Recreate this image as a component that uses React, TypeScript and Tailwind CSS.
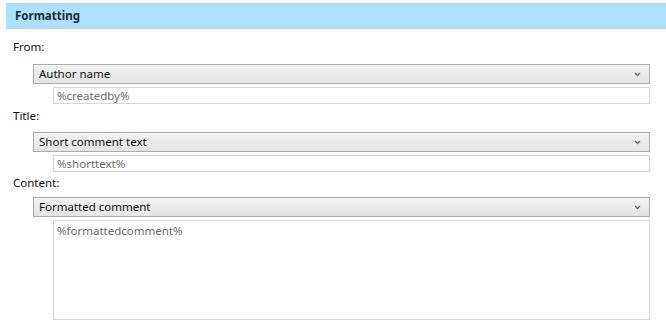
import React from 'react';

const font = { fontFamily: '"Noto Sans", "Open Sans", Arial, sans-serif' };

const Chevron = () => (
  <svg width="7" height="5" viewBox="0 0 7 5" className="shrink-0">
    <path d="M1 1 L3.5 3.5 L6 1" fill="none" stroke="#6a6a6a" strokeWidth="1.3" />
  </svg>
);

const Dropdown = ({ value, className = '' }: { value: string; className?: string }) => (
  <div
    className={`ml-[20px] w-[617px] h-[20px] flex items-center justify-between border border-[#acacac] bg-gradient-to-b from-[#f3f3f3] to-[#e4e4e4] pl-[5px] pr-[8px] text-[11.5px] text-[#111] ${className}`}
  >
    <span className="leading-[18px]">{value}</span>
    <Chevron />
  </div>
);

const Field = ({ value, tall = false }: { value: string; tall?: boolean }) => (
  <div
    className={`ml-[40px] mt-[3px] w-[597px] border border-[#d6d6d6] bg-white pl-[3px] text-[11.5px] text-[#6d6d6d] ${
      tall ? 'h-[100px] pt-[1px]' : 'h-[17px] flex items-center'
    }`}
  >
    <span className="leading-[15px]">{value}</span>
  </div>
);

export default function App() {
  return (
    <div className="w-[666px] h-[327px] bg-white overflow-hidden" style={font}>
      {/* Section header */}
      <div className="mt-[3px] ml-[6px] h-[26px] bg-[#ade1fb] pl-[9px] flex items-center">
        <span className="text-[11.5px] font-bold text-[#1c2b36]">Formatting</span>
      </div>

      <div className="pl-[13px]">
        <div className="mt-[10px] text-[11.5px] leading-[16px] text-[#111]">From:</div>
        <Dropdown value="Author name" className="mt-[9px]" />
        <Field value="%createdby%" />

        <div className="mt-[4px] text-[11.5px] leading-[16px] text-[#111]">Title:</div>
        <Dropdown value="Short comment text" className="mt-[8px]" />
        <Field value="%shorttext%" />

        <div className="mt-[3px] text-[11.5px] leading-[16px] text-[#111]">Content:</div>
        <Dropdown value="Formatted comment" className="mt-[6px]" />
        <Field value="%formattedcomment%" tall />
      </div>
    </div>
  );
}
